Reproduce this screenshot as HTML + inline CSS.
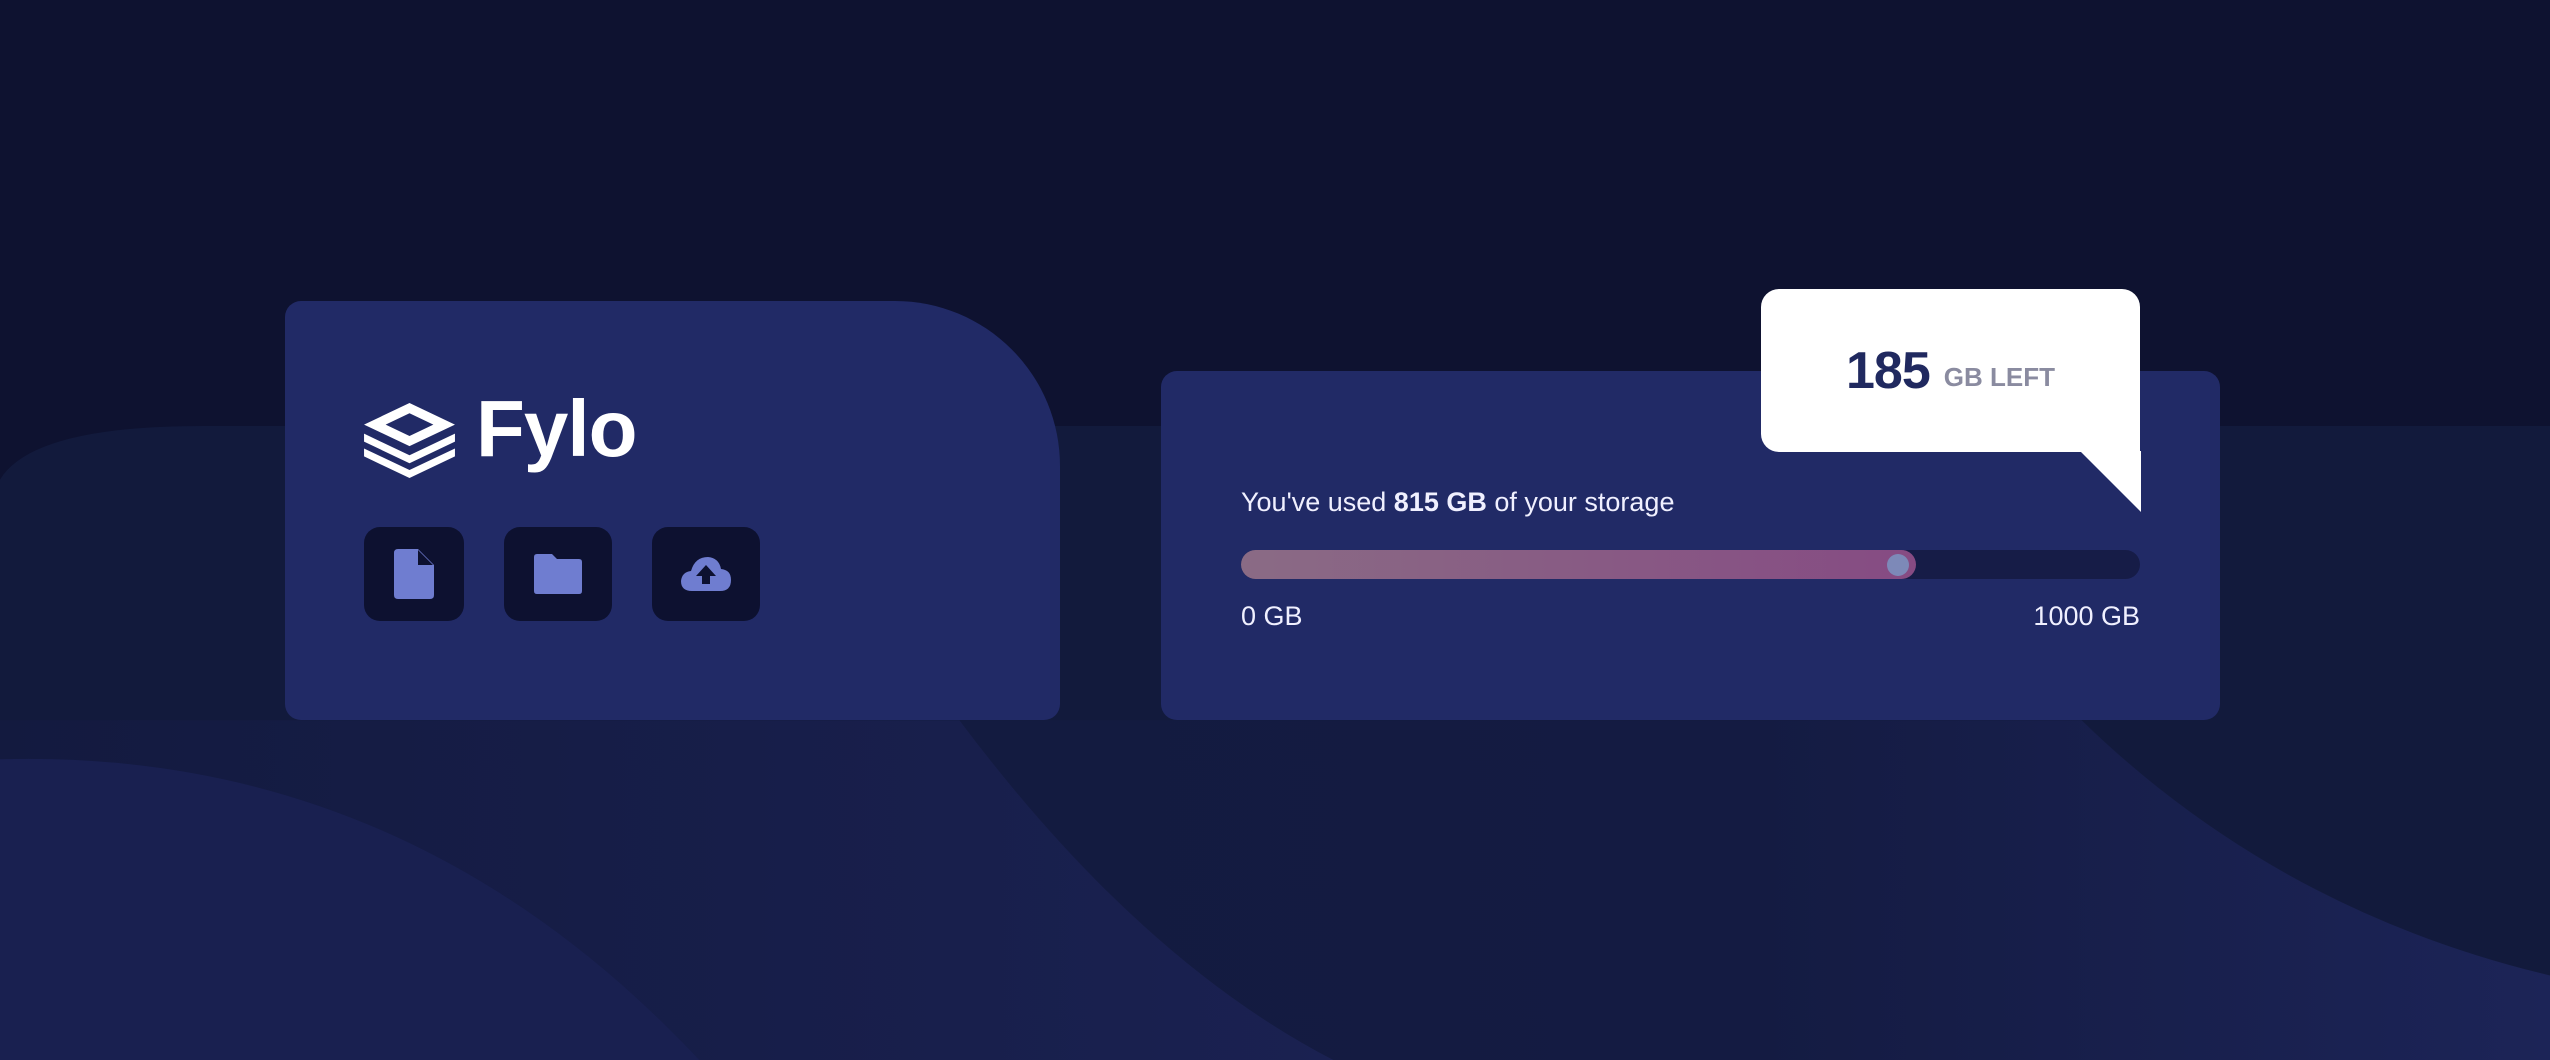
<!DOCTYPE html>
<html><head><meta charset="utf-8"><style>
*{margin:0;padding:0;box-sizing:border-box}
body{width:2550px;height:1060px;overflow:hidden;background:#0e1230;font-family:"Liberation Sans",sans-serif;position:relative}
svg.bg{position:absolute;left:0;top:0}
.card{position:absolute;background:#212a66}
#left{left:285px;top:301px;width:775px;height:419px;border-radius:16px 165px 16px 16px}
#right{left:1161px;top:371px;width:1059px;height:349px;border-radius:16px}
.ib{position:absolute;top:226px;width:106px;height:94px;background:#0d1130;border-radius:16px;display:flex;align-items:center;justify-content:center}
.bubble{position:absolute;left:1761px;top:289px;width:379px;height:163px;background:#fff;border-radius:18px 18px 0 18px;display:flex;align-items:center;justify-content:center}
.t{position:absolute;color:#f0f0ff;font-size:27px}
</style></head><body>
<svg class="bg" width="2550" height="1060" viewBox="0 0 1568 652" preserveAspectRatio="none">
<defs>
<linearGradient id="g1" x1="0" x2="1" y1="0" y2="0"><stop offset="0" stop-color="#131a3f"/><stop offset="1" stop-color="#1a2151"/></linearGradient>
<linearGradient id="g2" x1="0" x2="1" y1="0" y2="0"><stop offset="0" stop-color="#131b40"/><stop offset="0.5" stop-color="#141b42"/><stop offset="1" stop-color="#1c2457"/></linearGradient>
</defs>
<path d="M0,295 Q20,262 125,262 L1568,262 L1568,652 L0,652Z" fill="#121a3c"/>
<path d="M0,443 L590,443 Q700,590 820,652 L0,652Z" fill="url(#g1)"/>
<path d="M590,443 L1280,443 Q1400,560 1568,600 L1568,652 L820,652 Q700,590 590,443Z" fill="url(#g2)"/>
<path d="M0,467 Q250,460 430,652 L0,652Z" fill="#192050"/>
</svg>
<div class="card" id="left">
 <svg style="position:absolute;left:79px;top:102px" width="91" height="75" viewBox="0 0 40 33"><g fill="#fff"><path d="M20 0L40 9.5 20 19 0 9.5Z M20 4.5L9.5 9.5 20 14.5 30.5 9.5Z" fill-rule="evenodd"/><path d="M0 13.5L20 23 40 13.5V17L20 26.5 0 17Z"/><path d="M0 20L20 29.5 40 20V23.5L20 33 0 23.5Z"/></g></svg>
 <div style="position:absolute;left:191px;top:82px;color:#fff;font-size:80px;font-weight:bold;letter-spacing:-1px">Fylo</div>
 <div class="ib" style="left:79px;width:100px"><svg width="40" height="50" viewBox="0 0 40 50"><path d="M4 0H24L40 16V46Q40 50 36 50H4Q0 50 0 46V4Q0 0 4 0Z" fill="#6f7dd0"/><path d="M24 1V16H39Z" fill="#0d1130"/></svg></div>
 <div class="ib" style="left:219px;width:108px"><svg width="48" height="40" viewBox="0 0 48 40"><path d="M3 0H18L23 5H45Q48 5 48 8V37Q48 40 45 40H3Q0 40 0 37V3Q0 0 3 0Z" fill="#6f7dd0"/></svg></div>
 <div class="ib" style="left:367px;width:108px"><svg width="50" height="34" viewBox="0 0 50 34"><path d="M11 34Q0 34 0 24Q1 15 10 14Q14 0 27 0Q38 1 40 12Q50 13 50 23Q50 34 39 34Z" fill="#6f7dd0"/><path d="M25 8L35 19H29V27H21V19H15Z" fill="#0d1130"/></svg></div>
</div>
<div class="card" id="right">
 <div class="t" style="left:80px;top:116px">You've used <b>815 GB</b> of your storage</div>
 <div style="position:absolute;left:80px;top:179px;width:899px;height:29px;border-radius:15px;background:#161c47"></div>
 <div style="position:absolute;left:80px;top:179px;width:675px;height:29px;border-radius:15px;background:linear-gradient(90deg,#8a6b85,#864b83)"></div>
 <div style="position:absolute;left:726px;top:183px;width:22px;height:22px;border-radius:50%;background:#7d89b8"></div>
 <div class="t" style="left:80px;top:230px">0 GB</div>
 <div class="t" style="right:80px;top:230px">1000 GB</div>
</div>
<div class="bubble"><span style="font-size:52px;font-weight:bold;color:#20295f;letter-spacing:-1px">185</span><span style="font-size:26px;font-weight:bold;color:#8a8ba0;margin-left:14px;margin-top:14px">GB LEFT</span></div>
<svg style="position:absolute;left:2080px;top:451px" width="61" height="61" viewBox="0 0 61 61"><path d="M0 0H61V61Z" fill="#fff"/></svg>
</body></html>
